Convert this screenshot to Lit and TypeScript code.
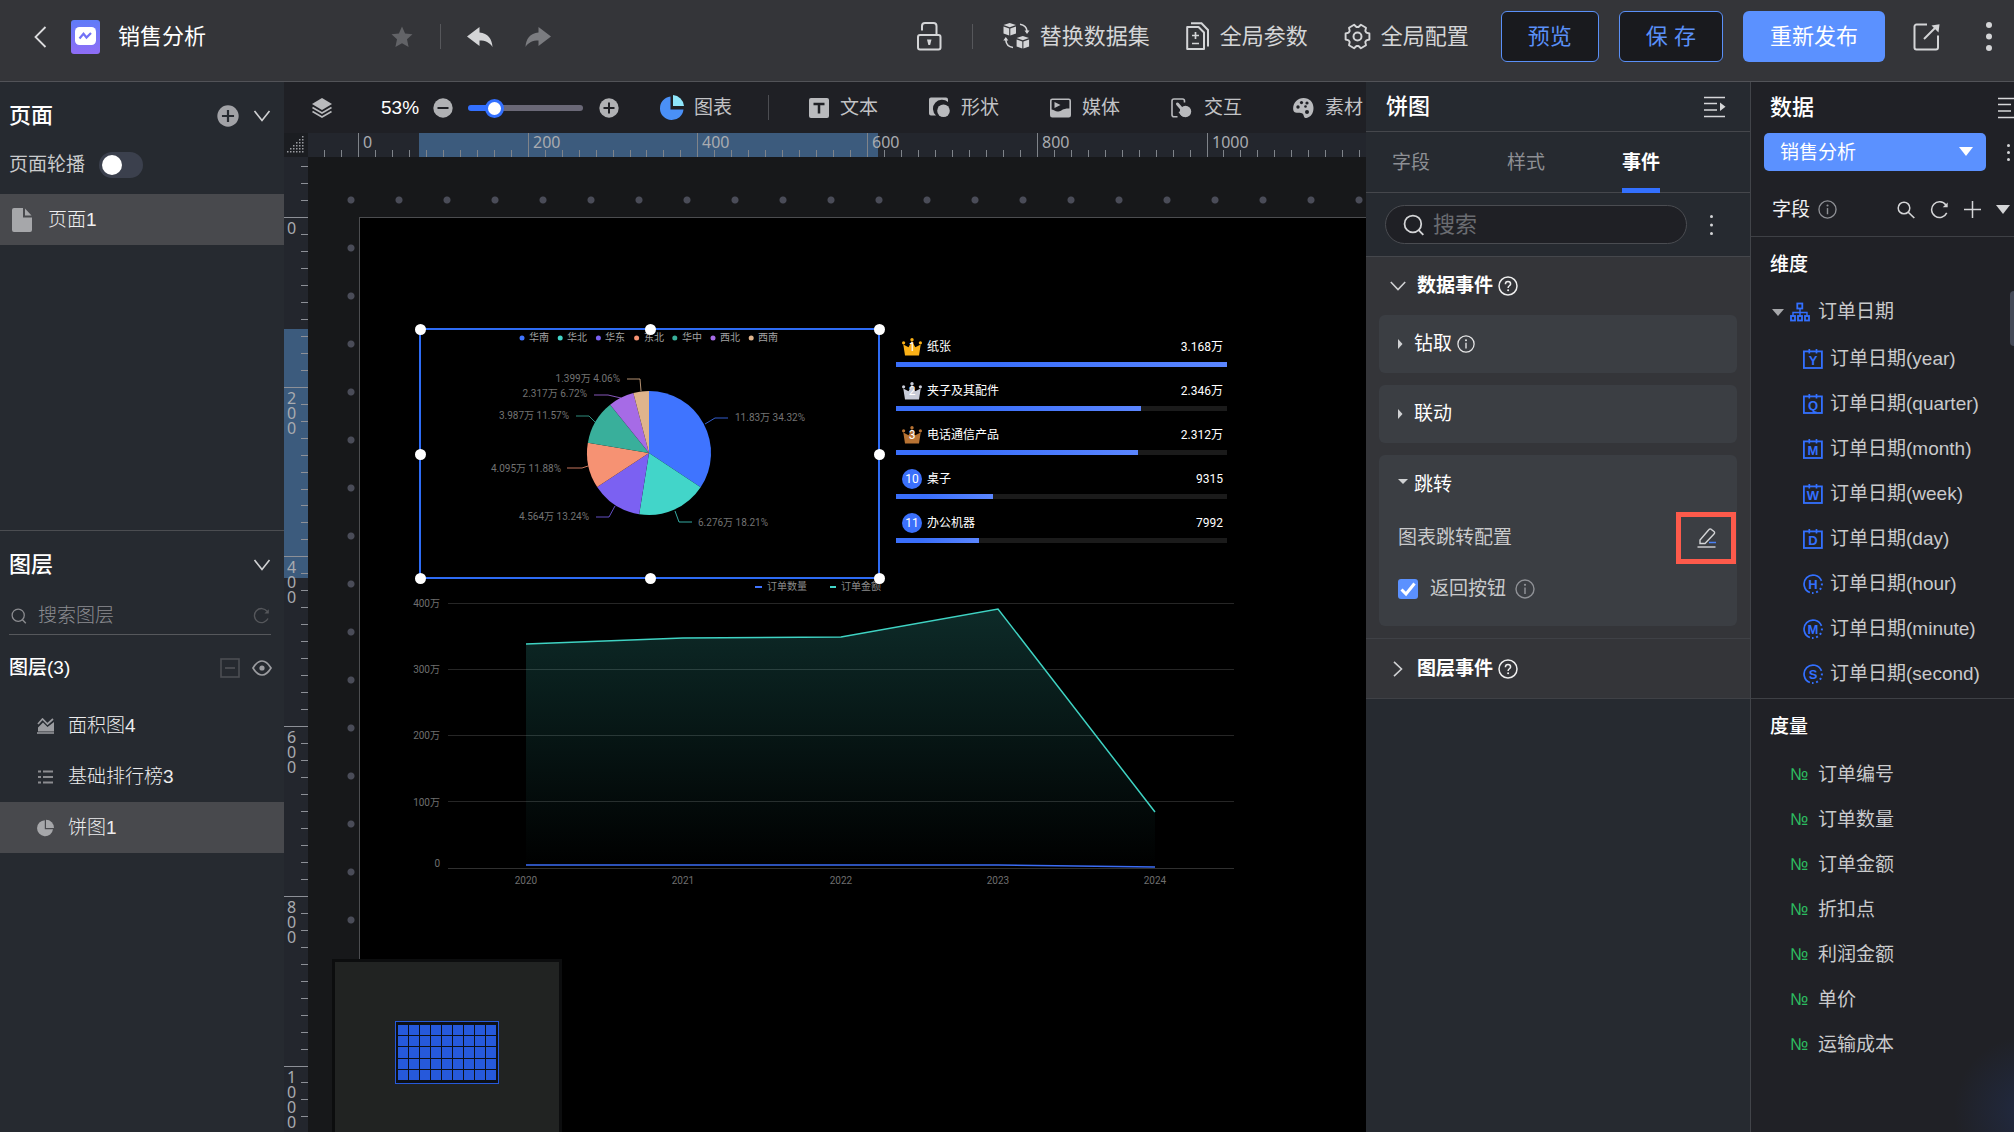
import { LitElement, html, svg, css, nothing } from "lit";
import { customElement, state } from "lit/decorators.js";
import { classMap } from "lit/directives/class-map.js";
import { styleMap } from "lit/directives/style-map.js";

/* ---------- shared look ---------- */

const base = css`
  * { box-sizing: border-box; }
  :host {
    font-family: "Liberation Sans", "Noto Sans CJK SC", sans-serif;
    font-size: 19px;
    line-height: 28px;
    color: #c9cacc;
  }
  button {
    background: none; border: 0; padding: 0; margin: 0; color: inherit;
    font: inherit; display: flex; align-items: center; cursor: pointer; flex: none;
  }
  h2, h3, p, ul { margin: 0; padding: 0; font: inherit; list-style: none; }
  svg { display: block; flex: none; }
  input, select { font: inherit; margin: 0; }
`;

/* ---------- icons ---------- */

const ic = (w: number, h: number, body: unknown, box = `0 0 ${w} ${h}`) =>
  html`<svg width=${w} height=${h} viewBox=${box} fill="none" aria-hidden="true">${body}</svg>`;

const chevronDown = ic(18, 12, svg`<path d="M1.500 1 9 10.500 16.500 1" stroke="#d0d1d3" stroke-width="1.600"/>`);
const infoIcon = (size: number, color: string) =>
  ic(size, size, svg`<circle cx="10" cy="10" r="9" stroke=${color} stroke-width="1.400"/><path d="M10 8.500V15" stroke=${color} stroke-width="1.500"/><circle cx="10" cy="5.800" r="1.100" fill=${color}/>`, "0 0 20 20");
const helpIcon = ic(20, 20, svg`<circle cx="10" cy="10" r="9" stroke="#eee" stroke-width="1.500"/><path d="M7.400 8.200C7.400 6.500 8.500 5.500 10 5.500s2.600 1 2.600 2.400c0 1.800-2.500 1.900-2.500 4" stroke="#eee" stroke-width="1.500"/><circle cx="10.100" cy="14.300" r="1" fill="#eee"/>`);
const magnifier = (size: number, color: string) =>
  ic(size, size, svg`<circle cx="9" cy="9" r="7.600" stroke=${color} stroke-width="1.600"/><path d="M14 14.500 18.500 19" stroke=${color} stroke-width="1.700"/>`, "0 0 20 20");
const longMagnifier = ic(18, 18, svg`<circle cx="7" cy="7" r="5.800" stroke="#d4d5d7" stroke-width="1.500"/><path d="M11 11 17.300 17" stroke="#d4d5d7" stroke-width="1.700"/>`);
const reload = (size: number, color: string) =>
  ic(size, size, svg`<path d="M16.700 5.200A8.300 8.300 0 1 0 17.600 13.500" stroke=${color} stroke-width="1.600"/><path d="M18.600 2.500V7.600H13.400" fill=${color}/>`, "0 0 20 20");
const kebab = (h: number, r: number, color = "#d4d5d7") => {
  const w = r * 2 + 2;
  return ic(w, h, svg`${[r, h / 2, h - r].map((y) => svg`<circle cx=${w / 2} cy=${y} r=${r} fill=${color}/>`)}`);
};
const foldIcon = ic(22, 22, svg`<path d="M0 1.500H21M0 7.500H13M0 14H13M0 20.500H21" stroke="#d6d7d9" stroke-width="1.700"/><path d="M16 6.500 21.500 10.800 16 15Z" fill="#d6d7d9"/>`);
const roundSign = (size: number, plus: boolean, fill: string, ink: string) =>
  ic(size, size, svg`<circle cx="10" cy="10" r="9.700" fill=${fill}/><path d=${plus ? "M4.500 10H15.500M10 4.500V15.500" : "M4.500 10H15.500"} stroke=${ink} stroke-width="2"/>`, "0 0 20 20");
const caretDown = (w: number, h: number, color: string) =>
  ic(w, h, svg`<path d=${`M0 0H${w}L${w / 2} ${h}Z`} fill=${color}/>`);

const backIcon = ic(20, 24, svg`<path d="M15.500 2 5.500 12 15.500 22" stroke="#dcdcde" stroke-width="1.800"/>`);
const appLogo = html`<svg width="29" height="34" viewBox="0 0 29 34" fill="none" aria-hidden="true">
  <defs><linearGradient id="lg" x1="0" y1="0" x2="0" y2="1"><stop offset="0" stop-color="#5f7cf8"/><stop offset="1" stop-color="#8f6df6"/></linearGradient></defs>
  <rect width="29" height="34" rx="3" fill="url(#lg)"/><rect x="4" y="7" width="21" height="18" rx="4.500" fill="#fff"/>
  <path d="M8.500 18.500 12.500 13.800 15.500 17.500 20 13" stroke="#7272f6" stroke-width="2.200"/></svg>`;
const starIcon = ic(24, 24, svg`<path d="M12 1.500 15.100 8.600 22.500 9.200 17 14.300 18.600 22 12 18.200 5.400 22 7 14.300 1.500 9.200 8.900 8.600Z" fill="#626367"/>`);
const undoPath = "M0 9.500 12.500 0V5.600C21 6.500 25 12 25.500 20 22.500 15.500 18.500 13.600 12.500 13.600V19Z";
const undoIcon = ic(26, 20, svg`<path d=${undoPath} fill="#d4d5d7"/>`);
const redoIcon = ic(26, 20, svg`<path d=${undoPath} fill="#7b7c80" transform="translate(26 0) scale(-1 1)"/>`);
const lockIcon = ic(25, 29, svg`<rect x="1" y="13" width="22.500" height="14.500" rx="2" stroke="#d4d5d7" stroke-width="2"/><path d="M5 8.500V4a3 3 0 0 1 3-3h8.500a3 3 0 0 1 3 3V13" stroke="#d4d5d7" stroke-width="2"/><path d="M10 17.500h4.500l-1.400 5.500h-1.700Z" fill="#d4d5d7"/>`);
const swapIcon = ic(27, 27, svg`<g fill="#d4d5d7"><path d="M6.700 0 13 2 6.700 4.200.5 2ZM.5 3.600 6.200 5.600V12.500L.5 10.500ZM13 3.600 7.300 5.600V12.500L13 10.500Z"/><path d="M19.800 13 26 15 19.800 17.200 13.600 15ZM13.600 16.600 19.300 18.600V25.500L13.600 23.500ZM26.100 16.600 20.400 18.600V25.500L26.100 23.500Z"/><path d="M21.500 7.500H26.500L24 11ZM.3 17.500H5.300L2.800 14Z"/></g><path d="M17 1.300C21 2 23.600 4 24 8M10 24.500C6 24 3.200 21.500 2.800 17" stroke="#d4d5d7" stroke-width="1.600"/>`);
const paramIcon = ic(24, 29, svg`<path d="M1.200 5H12.500L18 10.500V27H1.200Z" stroke="#d4d5d7" stroke-width="2" stroke-linejoin="round"/><path d="M5 1.200H15.500L22 8V24.500" stroke="#d4d5d7" stroke-width="2"/><path d="M6 13.500H13M9.500 10V17M6 21.500H13" stroke="#d4d5d7" stroke-width="1.700"/>`);
const gearOutline = Array.from({ length: 6 }, (_, k) =>
  [[-14, 12.3], [14, 12.3], [24, 9.6], [36, 9.6]].map(([a, r]) => {
    const t = ((k * 60 + a) * Math.PI) / 180;
    return `${(13.5 + r * Math.cos(t)).toFixed(1)} ${(13.5 + r * Math.sin(t)).toFixed(1)}`;
  }).join(" ")).join(" ");
const gearIcon = ic(27, 27, svg`<polygon points=${gearOutline} stroke="#d4d5d7" stroke-width="1.900" stroke-linejoin="round"/><circle cx="13.500" cy="13.500" r="4" stroke="#d4d5d7" stroke-width="2"/>`);
const shareIcon = ic(28, 28, svg`<path d="M14 1.500H3.500a2 2 0 0 0-2 2v21a2 2 0 0 0 2 2H23a2 2 0 0 0 2-2V12.500" stroke="#d4d5d7" stroke-width="2"/><path d="M11 16 23 4" stroke="#d4d5d7" stroke-width="2"/><path d="M18.500 2.500 26.500 1.200 25.500 9.500Z" fill="#d4d5d7"/>`);

const layersIcon = ic(20, 20, svg`<path d="M10 0 20 6 10 12 0 6Z" fill="#b9babd"/><path d="M.5 9.500 10 15 19.500 9.500M.5 13.500 10 19 19.500 13.500" stroke="#b9babd" stroke-width="1.600"/>`);
const pieColour = ic(26, 26, svg`<path d="M11.500 1.500A11.800 11.800 0 1 0 24.500 14.500H11.500Z" fill="#4a90f7"/><path d="M14 0A12 12 0 0 1 25 11H14Z" fill="#8fe6fb"/>`);
const textIcon = ic(20, 20, svg`<rect width="20" height="20" rx="2" fill="#b9babd"/><path d="M4.500 6H15.500M10 6V15.500" stroke="#1f2025" stroke-width="2.500"/>`);
const shapeIcon = ic(21, 21, svg`<path d="M2 .5H17a2 2 0 0 1 2 2V5A8.500 8.500 0 0 0 7 18.500H2a2 2 0 0 1-2-2V2.500a2 2 0 0 1 2-2Z" fill="#b9babd"/><circle cx="14.500" cy="13.700" r="6.300" fill="#b9babd"/>`);
const mediaIcon = ic(21, 20, svg`<rect x=".8" y="1.200" width="19.400" height="17.600" rx="1.500" stroke="#b9babd" stroke-width="1.600"/><path d="M1 11.500C4 11.500 5.500 14 8.500 13.500S13 10 20 10.500V18.500H1Z" fill="#b9babd"/><path d="M4.500 4 10.500 7 4.500 10Z" fill="#b9babd"/>`);
const touchIcon = ic(22, 20, svg`<path d="M6.500 18.800H3a2 2 0 0 1-2-2V3a2 2 0 0 1 2-2H11.500a2 2 0 0 1 2 2V4.500" stroke="#b9babd" stroke-width="1.600"/><path d="M6.500 6 12.500 13" stroke="#b9babd" stroke-width="3" stroke-linecap="round"/><circle cx="14.500" cy="13.500" r="5.700" fill="#b9babd"/><path d="M7.500 14 11 13 13 19C10 18.500 9 16 7.500 14Z" fill="#b9babd"/>`);
const paletteIcon = ic(21, 20, svg`<path d="M10.500 0C16.500 0 20.500 4.200 20.500 10S17.500 19 13.500 20C10 20.500 11.500 16 9 15.200 6.500 14.500.5 16 .2 11.500-.5 5 4.500 0 10.500 0Z" fill="#b9babd"/><g fill="#1f2025"><circle cx="5" cy="9" r="1.700"/><circle cx="8.500" cy="4.600" r="1.600"/><circle cx="14" cy="5" r="1.600"/><circle cx="12.500" cy="8.500" r="1.300"/><circle cx="14" cy="14" r="2"/></g>`);

const fileIcon = ic(20, 24, svg`<path d="M2 0H11V9.500H20V22a2 2 0 0 1-2 2H2a2 2 0 0 1-2-2V2A2 2 0 0 1 2 0Z" fill="#a6a7aa"/><path d="M13 .5 19.500 7.500H13Z" fill="#a6a7aa"/>`);
const eyeIcon = ic(20, 16, svg`<path d="M1 8C4 3 7 1 10 1S16 3 19 8C16 13 13 15 10 15S4 13 1 8Z" stroke="#9b9ca0" stroke-width="1.700"/><circle cx="10" cy="8" r="2.600" fill="#9b9ca0"/>`);
const collapseIcon = ic(20, 20, svg`<rect x="1" y="1" width="18" height="18" stroke="#4c4e53" stroke-width="1.600"/><path d="M5 10H15" stroke="#4c4e53" stroke-width="1.800"/>`);
const areaIcon = ic(18, 16, svg`<path d="M1 13.500V9.500L6 4.500 10.500 9 17 4V13.500Z" fill="#9b9ca0"/><path d="M1 6 5.500 1 10.500 6 16 1" stroke="#9b9ca0" stroke-width="1.700"/><path d="M0 15H17" stroke="#9b9ca0" stroke-width="1.500"/>`);
const rankIcon = ic(18, 16, svg`<path d="M1 2.500H4M6 2.500H16M1 8H4M6 8H16M1 13.500H4M6 13.500H16" stroke="#8b8c90" stroke-width="2"/>`);
const pieIcon = ic(18, 18, svg`<path d="M7.800 1.200A8 8 0 1 0 16 10.200H7.800Z" fill="#a6a7aa"/><path d="M9 .8A8 8 0 0 1 17 9H9Z" fill="#a6a7aa"/>`);

const pencilIcon = ic(20, 22, svg`<path d="M3 16.500V13L12 2.500a1.500 1.500 0 0 1 2.400 0L17 4.500a1.500 1.500 0 0 1 0 2.400L8 16.500Z" stroke="#d4d5d7" stroke-width="1.400"/><path d="M.5 20H18.500" stroke="#d4d5d7" stroke-width="1.400"/><path d="M12 15.500H19" stroke="#4a80f5" stroke-width="1.500"/>`);
const tickMark = ic(20, 20, svg`<path d="M3.500 10.500 8 15 16.500 4.500" stroke="#fff" stroke-width="3"/>`);
const treeIcon = ic(20, 20, svg`<g stroke="#3370ff" stroke-width="1.800"><rect x="7.300" y="1.500" width="5" height="5"/><rect x="1" y="14" width="4" height="4.500"/><rect x="8" y="14" width="4" height="4.500"/><rect x="15" y="14" width="4" height="4.500"/><path d="M10 7V14M3 14V10.500H17V14" stroke-width="1.400"/></g>`);
const badgeIcon = (letter: string, round: boolean) =>
  html`<svg width="20" height="20" viewBox="0 0 20 20" fill="none" aria-hidden="true">
    ${round
      ? svg`<path d="M18.500 6.900A9 9 0 1 0 6.900 18.500" stroke="#3370ff" stroke-width="1.700"/><path d="M18.900 9.500A9 9 0 0 1 9 18.900" stroke="#3370ff" stroke-width="2" stroke-dasharray="2 2.600"/>`
      : svg`<rect x=".9" y="2.400" width="18" height="16.600" stroke="#3370ff" stroke-width="1.800"/><path d="M6.300 0V4.500M13.500 0V4.500" stroke="#3370ff" stroke-width="1.700"/>`}
    <text x="10" y=${round ? 15 : 16} text-anchor="middle" font-family="Liberation Sans, sans-serif" font-weight="700" font-size="13" fill="#3370ff">${letter}</text></svg>`;

/* ---------- top bar ---------- */

@customElement("top-bar")
export class TopBar extends LitElement {
  static styles = [base, css`
    :host { display: block; }
    header {
      display: flex; align-items: center; height: 82px; padding: 0 21px 8px 30px;
      background: #343539; border-bottom: 1px solid #525358; font-size: 22px; color: #d4d5d7;
      white-space: nowrap;
    }
    .logo { margin-left: 21px; }
    .title { width: 290px; padding-left: 18px; color: #fff; }
    .rule { width: 1px; height: 25px; background: #56575b; margin: 0 26px; flex: none; }
    .wide { margin: 0 30px; }
    .redo { margin-left: 32px; }
    .grow { flex: 1; }
    .tools { display: flex; align-items: center; gap: 36px; margin-right: 32px; }
    .tools button { gap: 10px; }
    .tail { display: flex; align-items: center; gap: 20px; }
    .outline, .solid { height: 51px; justify-content: center; border-radius: 6px; }
    .outline { border: 1px solid #5a90f8; background: #191a1e; color: #5a90f8; padding: 0 26px; }
    .solid { background: #5b91ff; color: #fff; padding: 0 27px; }
    .share { margin-left: 8px; margin-right: 24px; }
  `];
  render() {
    return html`<header>
      <button aria-label="返回">${backIcon}</button>
      <span class="logo">${appLogo}</span>
      <h2 class="title">销售分析</h2>
      <button aria-label="收藏">${starIcon}</button>
      <span class="rule"></span>
      <button aria-label="撤销">${undoIcon}</button>
      <button class="redo" aria-label="重做">${redoIcon}</button>
      <span class="grow"></span>
      <button aria-label="锁定">${lockIcon}</button>
      <span class="rule wide"></span>
      <div class="tools">
        <button>${swapIcon}替换数据集</button>
        <button>${paramIcon}全局参数</button>
        <button>${gearIcon}全局配置</button>
      </div>
      <div class="tail">
        <button class="outline">预览</button>
        <button class="outline">保 存</button>
        <button class="solid">重新发布</button>
        <button class="share" aria-label="分享">${shareIcon}</button>
        <button aria-label="更多">${kebab(29, 3)}</button>
      </div>
    </header>`;
  }
}

/* ---------- left column ---------- */

@customElement("page-panel")
export class PagePanel extends LitElement {
  static styles = [base, css`
    :host { display: flex; flex-direction: column; background: #262a30; }
    .pages { flex: 0 1 449px; border-bottom: 1px solid #4b4d51; padding-top: 13px; }
    .head { display: flex; align-items: center; height: 41px; padding: 0 13px 0 9px; gap: 14px; }
    .head h2 { flex: 1; font-size: 22px; font-weight: 500; color: #fff; }
    .carousel { display: flex; align-items: center; height: 58px; padding-left: 9px; gap: 14px; }
    .toggle {
      appearance: none; width: 44px; height: 26px; border-radius: 13px; background: #3b404d;
      display: flex; align-items: center; padding: 3px; cursor: pointer;
    }
    .toggle::before { content: ""; width: 20px; height: 20px; border-radius: 50%; background: #fff; }
    .toggle:checked { justify-content: flex-end; background: #3370ff; }
    .page { width: 100%; height: 51px; padding-left: 12px; gap: 16px; background: #48494d; color: #f0f0f1; font-weight: 300; }
    .search { display: flex; align-items: center; height: 50px; margin: 0 13px 0 9px; padding: 12px 1px 0 2px; gap: 11px; border-bottom: 1px solid #56585c; }
    .search input {
      flex: 1; min-width: 0; background: none; border: 0; outline: 0; padding: 0;
      color: #eee; font-weight: 300;
    }
    .search input::placeholder { color: #8b8c90; opacity: 1; }
    .layers { padding-top: 13px; }
    .group { display: flex; align-items: center; height: 65px; padding: 0 12px 0 9px; gap: 12px; }
    .group h3 { flex: 1; color: #fff; font-weight: 500; }
    .layer { width: 100%; height: 51px; padding-left: 37px; gap: 13px; color: #ececed; font-weight: 300; }
    .layer .ico { width: 18px; }
    .layer.on { background: #48494d; }
  `];
  @state() private current = 2;
  private layers = [
    { icon: areaIcon, name: "面积图4" },
    { icon: rankIcon, name: "基础排行榜3" },
    { icon: pieIcon, name: "饼图1" },
  ];
  render() {
    return html`
      <section class="pages">
        <div class="head"><h2>页面</h2>
          <button aria-label="添加页面">${roundSign(22, true, "#a1a2a6", "#262a30")}</button>
          <button aria-label="收起页面">${chevronDown}</button></div>
        <div class="carousel"><label for="loop">页面轮播</label><input id="loop" class="toggle" type="checkbox" role="switch" /></div>
        <button class="page">${fileIcon}页面1</button>
      </section>
      <section class="layers">
        <div class="head"><h2>图层</h2><button aria-label="收起图层">${chevronDown}</button></div>
        <div class="search">${magnifier(16, "#8b8c90")}<input type="text" aria-label="搜索图层" placeholder="搜索图层" />
          <button aria-label="刷新">${reload(17, "#55575b")}</button></div>
        <div class="group"><h3>图层(3)</h3><button aria-label="折叠">${collapseIcon}</button><button aria-label="显示">${eyeIcon}</button></div>
        <ul>${this.layers.map((l, i) => html`<li><button class=${classMap({ layer: true, on: i === this.current })}
          @click=${() => (this.current = i)}><span class="ico">${l.icon}</span>${l.name}</button></li>`)}</ul>
      </section>`;
  }
}

/* ---------- charts on the canvas ---------- */

const slices = [
  { name: "华南", pct: 34.32, color: "#3f74ff", label: "11.83万 34.32%", line: "285,95 295,89 308,89", x: 315, y: 92 },
  { name: "华北", pct: 18.21, color: "#42d5c9", label: "6.276万 18.21%", line: "255,182 259,193 272,193", x: 278, y: 197 },
  { name: "华东", pct: 13.24, color: "#7b61f2", label: "4.564万 13.24%", line: "195,177 189,188 176,188", x: 169, y: 191 },
  { name: "东北", pct: 11.88, color: "#f69273", label: "4.095万 11.88%", line: "168,137 162,139 147,139", x: 141, y: 143 },
  { name: "华中", pct: 11.57, color: "#39af9b", label: "3.987万 11.57%", line: "175,93 169,87 156,87", x: 149, y: 90 },
  { name: "西北", pct: 6.72, color: "#a66be6", label: "2.317万 6.72%", line: "201,69 188,66 174,66", x: 167, y: 68 },
  { name: "西南", pct: 4.06, color: "#e0b48c", label: "1.399万 4.06%", line: "221,62 220,50 207,50", x: 200, y: 53 },
];

@customElement("pie-widget")
export class PieWidget extends LitElement {
  static styles = [base, css`
    :host { display: block; width: 459px; height: 249px; }
    .lab { font: 10px Roboto, "Noto Sans CJK SC", sans-serif; fill: #737373; }
    .leg { font: 10px Roboto, "Noto Sans CJK SC", sans-serif; fill: #a3a3a3; }
    .end { text-anchor: end; }
  `];
  render() {
    const cx = 229, cy = 124, r = 62;
    const at = (p: number) => {
      const a = (p / 100) * Math.PI * 2;
      return `${(cx + r * Math.sin(a)).toFixed(2)} ${(cy - r * Math.cos(a)).toFixed(2)}`;
    };
    let sum = 0;
    return html`<svg width="459" height="249" viewBox="0 0 459 249" fill="none">
      ${slices.map((s, i) => svg`<circle cx=${102 + i * 38.2} cy="9" r="2.500" fill=${s.color}/><text class="leg" x=${109 + Math.round(i * 38.2)} y="12">${s.name}</text>`)}
      ${slices.map((s) => {
        const a = at(sum);
        sum += s.pct;
        return svg`<path d=${`M${cx} ${cy}L${a}A${r} ${r} 0 0 1 ${at(sum)}Z`} fill=${s.color}/>`;
      })}
      ${slices.map((s, i) => svg`<polyline points=${s.line} stroke=${s.color} stroke-opacity=".8"/><text class=${i > 1 ? "lab end" : "lab"} x=${s.x} y=${s.y}>${s.label}</text>`)}
    </svg>`;
  }
}

const crown = (fill: string) => ic(20, 18, svg`<g fill=${fill}><path d="M3 17.500 1.300 6.500 6.500 9.200 9.900 3 13.300 9.200 18.700 6.500 17 17.500Z"/><circle cx="1.600" cy="4.800" r="1.600"/><circle cx="10" cy="1.800" r="1.700"/><circle cx="18.400" cy="4.800" r="1.600"/></g>`);

@customElement("rank-widget")
export class RankWidget extends LitElement {
  static styles = [base, css`
    :host { display: block; width: 331px; font: 12px/22px Roboto, "Noto Sans CJK SC", sans-serif; color: #fff; }
    .row { display: grid; grid-template-columns: 20px 1fr auto; gap: 4px 6px; align-items: center; padding-bottom: 13px; }
    .mark { display: grid; place-items: center; height: 20px; margin-left: 6px; width: 20px; line-height: 20px; }
    .mark > * { grid-area: 1 / 1; }
    .disc { border-radius: 50%; background: #3b70fb; }
    .name { margin-left: 5px; }
    .value { margin-right: 4px; }
    .bar { grid-column: 1 / -1; height: 5px; background: #1b1b1b; }
    .fill { height: 5px; background: linear-gradient(90deg, #3a6ffb 30%, #5b86ff); }
  `];
  private rows = [
    { n: "1", tint: "#fbb117", name: "纸张", value: "3.168万", pct: 100 },
    { n: "2", tint: "#c8ccd8", name: "夹子及其配件", value: "2.346万", pct: 74 },
    { n: "3", tint: "#b87333", name: "电话通信产品", value: "2.312万", pct: 73 },
    { n: "10", tint: "", name: "桌子", value: "9315", pct: 29.4 },
    { n: "11", tint: "", name: "办公机器", value: "7992", pct: 25.2 },
  ];
  render() {
    return html`<ul>${this.rows.map((r) => html`<li class="row">
      <span class=${classMap({ mark: true, disc: !r.tint })}>${r.tint ? crown(r.tint) : nothing}<span>${r.n}</span></span>
      <span class="name">${r.name}</span><span class="value">${r.value}</span>
      <span class="bar"><div class="fill" style=${styleMap({ width: `${r.pct}%` })}></div></span></li>`)}</ul>`;
  }
}

@customElement("area-widget")
export class AreaWidget extends LitElement {
  static styles = [base, css`
    :host { display: block; width: 830px; height: 310px; }
    .axis { font: 10px Roboto, "Noto Sans CJK SC", sans-serif; fill: #6f6f6f; }
    .leg { font: 10px Roboto, "Noto Sans CJK SC", sans-serif; fill: #8a8a8a; }
    .end { text-anchor: end; }
    .mid { text-anchor: middle; }
  `];
  render() {
    const ticks = [["400万", 24, 27], ["300万", 90, 93], ["200万", 156, 159], ["100万", 222, 226], ["0", 289, 287]] as const;
    return html`<svg width="830" height="310" viewBox="0 0 830 310" fill="none">
      <defs><linearGradient id="fade" x1="0" y1="0" x2="0" y2="1"><stop offset="0" stop-color="#42d5c9" stop-opacity=".2"/><stop offset="1" stop-color="#42d5c9" stop-opacity="0"/></linearGradient></defs>
      ${ticks.map(([t, y, ty]) => svg`<path d=${`M38 ${y - 0.5}H824`} stroke=${t === "0" ? "#303030" : "#262626"}/><text class="axis end" x="30" y=${ty}>${t}</text>`)}
      ${["2020", "2021", "2022", "2023", "2024"].map((t, i) => svg`<text class="axis mid" x=${116 + Math.round(i * 157.300)} y="304">${t}</text>`)}
      <path d="M116 64 273 58 431 57 588 29 745 232V288H116Z" fill="url(#fade)"/>
      <path d="M116 64 273 58 431 57 588 29 745 232" stroke="#3fd3c3" stroke-width="1.500"/>
      <path d="M116 285H588L745 287" stroke="#3b6cf5" stroke-width="1.600"/>
      <path d="M345 7H352" stroke="#3f74ff" stroke-width="2"/><text class="leg" x="357" y="10">订单数量</text>
      <path d="M420 7H426" stroke="#42d5c9" stroke-width="2"/><text class="leg" x="431" y="10">订单金额</text>
    </svg>`;
  }
}

/* ---------- centre column ---------- */

@customElement("design-board")
export class DesignBoard extends LitElement {
  static styles = [base, css`
    :host { display: flex; flex-direction: column; background: #17181a; overflow: hidden; min-width: 0; }
    .bar { display: flex; align-items: center; height: 51px; padding-left: 28px; background: #1f2025; white-space: nowrap; flex: none; color: #c2c3c6; overflow: hidden; }
    .bar > * { flex: none; }
    .pct { width: 52px; margin-left: 49px; color: #fff; }
    .zoom {
      appearance: none; width: 115px; height: 20px; margin: 0 16px 0 15px; background: none; cursor: pointer;
    }
    .zoom::-webkit-slider-runnable-track { height: 6px; border-radius: 3px; background: linear-gradient(90deg, #3370ff 22%, #6a6877 22%); }
    .zoom::-webkit-slider-thumb { appearance: none; width: 19px; height: 19px; margin-top: -6px; border-radius: 50%; background: #fff; border: 3px solid #3370ff; }
    .kinds { display: flex; gap: 51px; }
    .kinds button { gap: 11px; }
    .charts { margin-left: 40px; gap: 9px; }
    .rule { width: 1px; height: 25px; background: #4c4d52; margin: 0 40px 0 36px; }
    .stage { flex: 1; min-height: 0; display: grid; grid-template: 24px 1fr / 24px 1fr; }
    .corner { background: #1b1d21; }
    .ruler { background: #23262d; overflow: hidden; position: relative; }
    .ruler text { font: 16px "Noto Sans", sans-serif; fill: #a9abb0; }
    .ruler svg { position: absolute; inset: 0; }
    .free { position: relative; overflow: hidden; }
    .free > * { position: absolute; }
    .row { left: 19px; top: 19px; right: 0; height: 48px; background: radial-gradient(circle at 24px 24px, #4a4c58 0 3px, transparent 4px) repeat-x 0 0 / 48px 48px; }
    .col { left: 19px; top: 67px; bottom: 0; width: 48px; background: radial-gradient(circle at 24px 24px, #4a4c58 0 3px, transparent 4px) repeat-y 0 0 / 48px 48px; }
    .screen { left: 51px; top: 60px; right: 0; bottom: 0; background: #000; border: solid #4c4d50; border-width: 1px 0 0 1px; }
    .pie { left: 112px; top: 172px; }
    .rank { left: 588px; top: 179px; }
    .area { left: 102px; top: 423px; }
    .frame { left: 112px; top: 172px; width: 459px; height: 249px; box-shadow: 0 0 0 1px #2e6cf5, inset 0 0 0 1px #2e6cf5; }
    .grip { position: absolute; width: 11px; height: 11px; margin: -5px; border-radius: 50%; background: #fff; }
    .map { left: 24px; bottom: 0; width: 230px; height: 173px; background: #212322; border: solid #0c0d0e; border-width: 3px 3px 0; padding: 59px 60px 48px; }
    .cells { height: 63px; border: 1px solid #2659db; background: #0d1016; padding: 3px 2px; display: grid; grid-template-columns: repeat(9, 1fr); gap: 1px; }
    .cells i { background: #2659db; }
  `];
  render() {
    const step = 169.7;
    const major = [0, 1, 2, 3, 4, 5];
    const minor = Array.from({ length: 64 }, (_, i) => i - 3).filter((i) => i % 10 !== 0);
    const kinds = [[textIcon, "文本"], [shapeIcon, "形状"], [mediaIcon, "媒体"], [touchIcon, "交互"], [paletteIcon, "素材"]] as const;
    const grips = [[0, 0], [50, 0], [100, 0], [0, 50], [100, 50], [0, 100], [50, 100], [100, 100]];
    return html`
      <div class="bar">
        <button aria-label="图层">${layersIcon}</button>
        <span class="pct">53%</span>
        <button aria-label="缩小">${roundSign(20, false, "#b0b1b4", "#1f2025")}</button>
        <input class="zoom" type="range" aria-label="缩放" min="0" max="100" value="18" />
        <button aria-label="放大">${roundSign(20, true, "#b0b1b4", "#1f2025")}</button>
        <button class="charts">${pieColour}图表</button>
        <span class="rule"></span>
        <div class="kinds">${kinds.map(([icon, t]) => html`<button>${icon}${t}</button>`)}</div>
      </div>
      <div class="stage">
        <div class="corner">${ic(24, 24, svg`${[0, 1, 2, 3, 4, 5].map((c) => Array.from({ length: c + 1 }, (_, r) => svg`<rect x=${3 + c * 3} y=${18 - r * 3} width="1.500" height="1.500" fill="#9a9ca1"/>`))}`)}</div>
        <div class="ruler"><svg width="3000" height="24">
          <rect x="111" width="459" height="24" fill="#3c5b7d"/>
          ${minor.filter((i) => i > -3).map((i) => svg`<rect x=${Math.round(50 + (i * step) / 10)} y="17" width="1" height="7" fill="#7f8389"/>`)}
          ${major.map((i) => svg`<rect x=${Math.round(50 + i * step)} width="1" height="24" fill="#7f8389"/><text x=${Math.round(55 + i * step)} y="15">${i * 200}</text>`)}
        </svg></div>
        <div class="ruler"><svg width="24" height="3000">
          <rect y="172" width="24" height="249" fill="#3c5b7d"/>
          ${minor.map((i) => svg`<rect x="17" y=${Math.round(60 + (i * step) / 10)} width="7" height="1" fill="#8d9097"/>`)}
          ${major.map((i) => svg`<rect y=${Math.round(60 + i * step)} width="24" height="1" fill="#8d9097"/>${[...String(i * 200)].map((d, k) => svg`<text x="3" y=${Math.round(60 + i * step) + 17 + k * 15}>${d}</text>`)}`)}
        </svg></div>
        <div class="free">
          <div class="row"></div><div class="col"></div>
          <div class="screen"></div>
          <area-widget class="area"></area-widget>
          <rank-widget class="rank"></rank-widget>
          <pie-widget class="pie"></pie-widget>
          <div class="frame">${grips.map(([x, y]) => html`<span class="grip" style=${styleMap({ left: `${x}%`, top: `${y}%` })}></span>`)}</div>
          <div class="map"><div class="cells">${Array.from({ length: 45 }, () => html`<i></i>`)}</div></div>
        </div>
      </div>`;
  }
}

/* ---------- event settings ---------- */

@customElement("event-panel")
export class EventPanel extends LitElement {
  static styles = [base, css`
    :host { display: block; background: #262a30; border-right: 1px solid #424449; }
    .head { display: flex; align-items: center; justify-content: space-between; height: 50px; padding: 0 24px 0 20px; border-bottom: 1px solid #45474c; }
    .head h2 { font-size: 22px; font-weight: 500; color: #fff; }
    .tabs { display: flex; gap: 77px; height: 61px; padding-left: 26px; border-bottom: 1px solid #45474c; }
    .tabs button { height: 61px; border-bottom: 5px solid transparent; border-top: 5px solid transparent; color: #8d8f94; }
    .tabs .on { color: #fff; font-weight: 700; border-bottom-color: #3370ff; }
    .find { display: flex; align-items: center; height: 64px; padding: 0 36px 0 19px; gap: 22px; border-bottom: 1px solid #45474c; }
    .box { flex: 1; min-width: 0; display: flex; align-items: center; gap: 8px; height: 39px; border: 1px solid #4a4c51; border-radius: 20px; background: #1f2025; padding: 0 17px; font-size: 22px; }
    .box input { flex: 1; min-width: 0; border: 0; outline: 0; padding: 0; background: none; color: #eee; }
    .box input::placeholder { color: #6a6c71; opacity: 1; }
    .block { background: #343539; border-bottom: 1px solid #3f4146; padding-bottom: 12px; }
    .cap { width: 100%; height: 58px; padding-left: 23px; color: #fff; font-weight: 700; gap: 5px; }
    .cap .mk { width: 18px; margin-right: 5px; display: grid; place-items: center; }
    .card { margin: 0 13px 12px; padding: 0 19px; border-radius: 6px; background: #3b3e43; }
    .sub { height: 58px; width: 100%; color: #fff; gap: 5px; }
    .sub .mk { width: 11px; }
    .jump { padding-bottom: 12px; margin-bottom: 0; }
    .jump .sub { height: 57px; padding-top: 3px; }
    .jump .mk { height: 12px; }
    .line { display: flex; align-items: center; justify-content: space-between; height: 52px; margin-right: -18px; }
    .edit { width: 60px; height: 52px; justify-content: center; border: 5px solid #fd5a4b; padding-left: 2px; }
    .check { display: flex; align-items: center; height: 50px; }
    .tick { position: relative; display: flex; width: 20px; height: 20px; margin-right: 12px; }
    .tick input { appearance: none; width: 20px; height: 20px; border-radius: 3px; background: #5b91ff; cursor: pointer; }
    .tick svg { position: absolute; inset: 0; pointer-events: none; }
    .check button { margin-left: 9px; }
    .last { padding-bottom: 0; padding-top: 1px; }
  `];
  @state() private tab = 2;
  render() {
    const right = ic(5, 10, svg`<path d="M0 0 4.500 5 0 10Z" fill="#d0d1d3"/>`);
    const down = caretDown(10, 5, "#d0d1d3");
    return html`
      <div class="head"><h2>饼图</h2><button aria-label="收起">${foldIcon}</button></div>
      <div class="tabs" role="tablist">${["字段", "样式", "事件"].map((t, i) => html`<button role="tab" aria-selected=${i === this.tab}
        class=${classMap({ on: i === this.tab })} @click=${() => (this.tab = i)}>${t}</button>`)}</div>
      <div class="find"><div class="box">${magnifier(22, "#d4d5d7")}<input type="text" aria-label="搜索" placeholder="搜索" /></div>
        <button aria-label="更多">${kebab(20, 1.5)}</button></div>
      <section class="block">
        <button class="cap"><span class="mk">${ic(16, 10, svg`<path d="M.8 1 8 8.500 15.200 1" stroke="#d0d1d3" stroke-width="1.600"/>`)}</span>数据事件${helpIcon}</button>
        <div class="card"><button class="sub"><span class="mk">${right}</span>钻取${infoIcon(18, "#e6e6e7")}</button></div>
        <div class="card"><button class="sub"><span class="mk">${right}</span>联动</button></div>
        <div class="card jump">
          <button class="sub"><span class="mk">${down}</span>跳转</button>
          <div class="line"><span>图表跳转配置</span><button class="edit" aria-label="编辑跳转">${pencilIcon}</button></div>
          <div class="check"><span class="tick"><input id="back" type="checkbox" checked />${tickMark}</span><label for="back">返回按钮</label>
            <button aria-label="说明">${infoIcon(20, "#8f9196")}</button></div>
        </div>
      </section>
      <section class="block last">
        <button class="cap"><span class="mk">${ic(10, 16, svg`<path d="M1 .8 8.500 8 1 15.200" stroke="#d0d1d3" stroke-width="1.600"/>`)}</span>图层事件${helpIcon}</button>
      </section>`;
  }
}

/* ---------- data fields ---------- */

@customElement("data-panel")
export class DataPanel extends LitElement {
  static styles = [base, css`
    :host { display: block; background: radial-gradient(circle at 106% 98%, #212a42 0, #202126 76px) #202126; overflow: hidden; white-space: nowrap; }
    .head { display: flex; align-items: center; height: 51px; padding: 0 0 0 19px; }
    .head h2 { width: 228px; flex: none; font-size: 22px; font-weight: 500; color: #fff; }
    .set { display: flex; align-items: center; padding: 0 3px 0 13px; gap: 20px; }
    .pick { position: relative; flex: 1; }
    .pick select { appearance: none; width: 100%; height: 38px; border: 0; border-radius: 5px; background: #5b91ff; color: #fff; padding: 2px 16px 0; }
    .pick svg { position: absolute; right: 13px; top: 14px; pointer-events: none; }
    .fields { display: flex; align-items: center; height: 66px; padding-left: 21px; margin-right: -10px; padding-top: 12px; border-bottom: 1px solid #3e4045; }
    .fields h3 { color: #f0f0f1; margin-right: 8px; }
    .acts { margin-left: auto; padding-right: 14px; display: flex; align-items: center; gap: 15px; }
    h3 { color: #fff; }
    .name { height: 55px; padding: 14px 0 0 19px; font-weight: 500; }
    .dim { position: relative; height: 462px; border-bottom: 1px solid #3e4045; }
    .thumb { position: absolute; right: 0; top: 54px; width: 4px; height: 55px; border-radius: 4px 0 0 4px; background: #444957; }
    .root { height: 40px; padding-left: 21px; gap: 6px; margin-bottom: 4px; }
    .root svg + svg { margin-right: 2px; }
    .leaf { height: 45px; padding-left: 52px; gap: 7px; }
    .num { height: 45px; padding-left: 38px; gap: 9px; }
    .no { width: 20px; color: #2dbd60; font-family: "Liberation Sans", sans-serif; font-size: 17px; }
    .measure { height: 53px; }
  `];
  render() {
    const parts: [string, string][] = [["Y", "year"], ["Q", "quarter"], ["M", "month"], ["W", "week"], ["D", "day"], ["H", "hour"], ["M", "minute"], ["S", "second"]];
    return html`
      <div class="head"><h2>数据</h2><button aria-label="收起数据">${foldIcon}</button></div>
      <div class="set"><span class="pick"><select aria-label="数据集"><option>销售分析</option></select>${caretDown(14, 9, "#fff")}</span>
        <button aria-label="更多">${kebab(17, 1.5)}</button></div>
      <div class="fields"><h3>字段</h3><button aria-label="说明">${infoIcon(19, "#8f9196")}</button>
        <div class="acts"><button aria-label="搜索">${longMagnifier}</button><button aria-label="刷新">${reload(19, "#d4d5d7")}</button>
          <button aria-label="添加">${ic(17, 17, svg`<path d="M8.500 0V17M0 8.500H17" stroke="#d4d5d7" stroke-width="1.500"/>`)}</button>
          <button aria-label="展开">${caretDown(14, 9, "#d4d5d7")}</button></div></div>
      <section class="dim">
        <h3 class="name">维度</h3>
        <button class="root">${caretDown(12, 7, "#a6a7aa")}${treeIcon}订单日期</button>
        <ul>${parts.map(([l, n], i) => html`<li><button class="leaf">${badgeIcon(l, i > 4)}订单日期(${n})</button></li>`)}</ul>
        <span class="thumb"></span>
      </section>
      <section>
        <h3 class="name measure">度量</h3>
        <ul>${["订单编号", "订单数量", "订单金额", "折扣点", "利润金额", "单价", "运输成本"].map((n) => html`<li><button class="num"><span class="no">№</span>${n}</button></li>`)}</ul>
      </section>`;
  }
}

/* ---------- page ---------- */

@customElement("app-root")
export class AppRoot extends LitElement {
  static styles = css`
    :host { display: flex; flex-direction: column; height: 100vh; overflow: hidden; background: #202126; }
    main { flex: 1; min-height: 0; display: grid; grid-template-columns: 284px minmax(0, 1fr) 385px 263px; grid-template-rows: minmax(0, 1fr); }
  `;
  render() {
    return html`<top-bar></top-bar>
      <main><page-panel></page-panel><design-board></design-board><event-panel></event-panel><data-panel></data-panel></main>`;
  }
}
